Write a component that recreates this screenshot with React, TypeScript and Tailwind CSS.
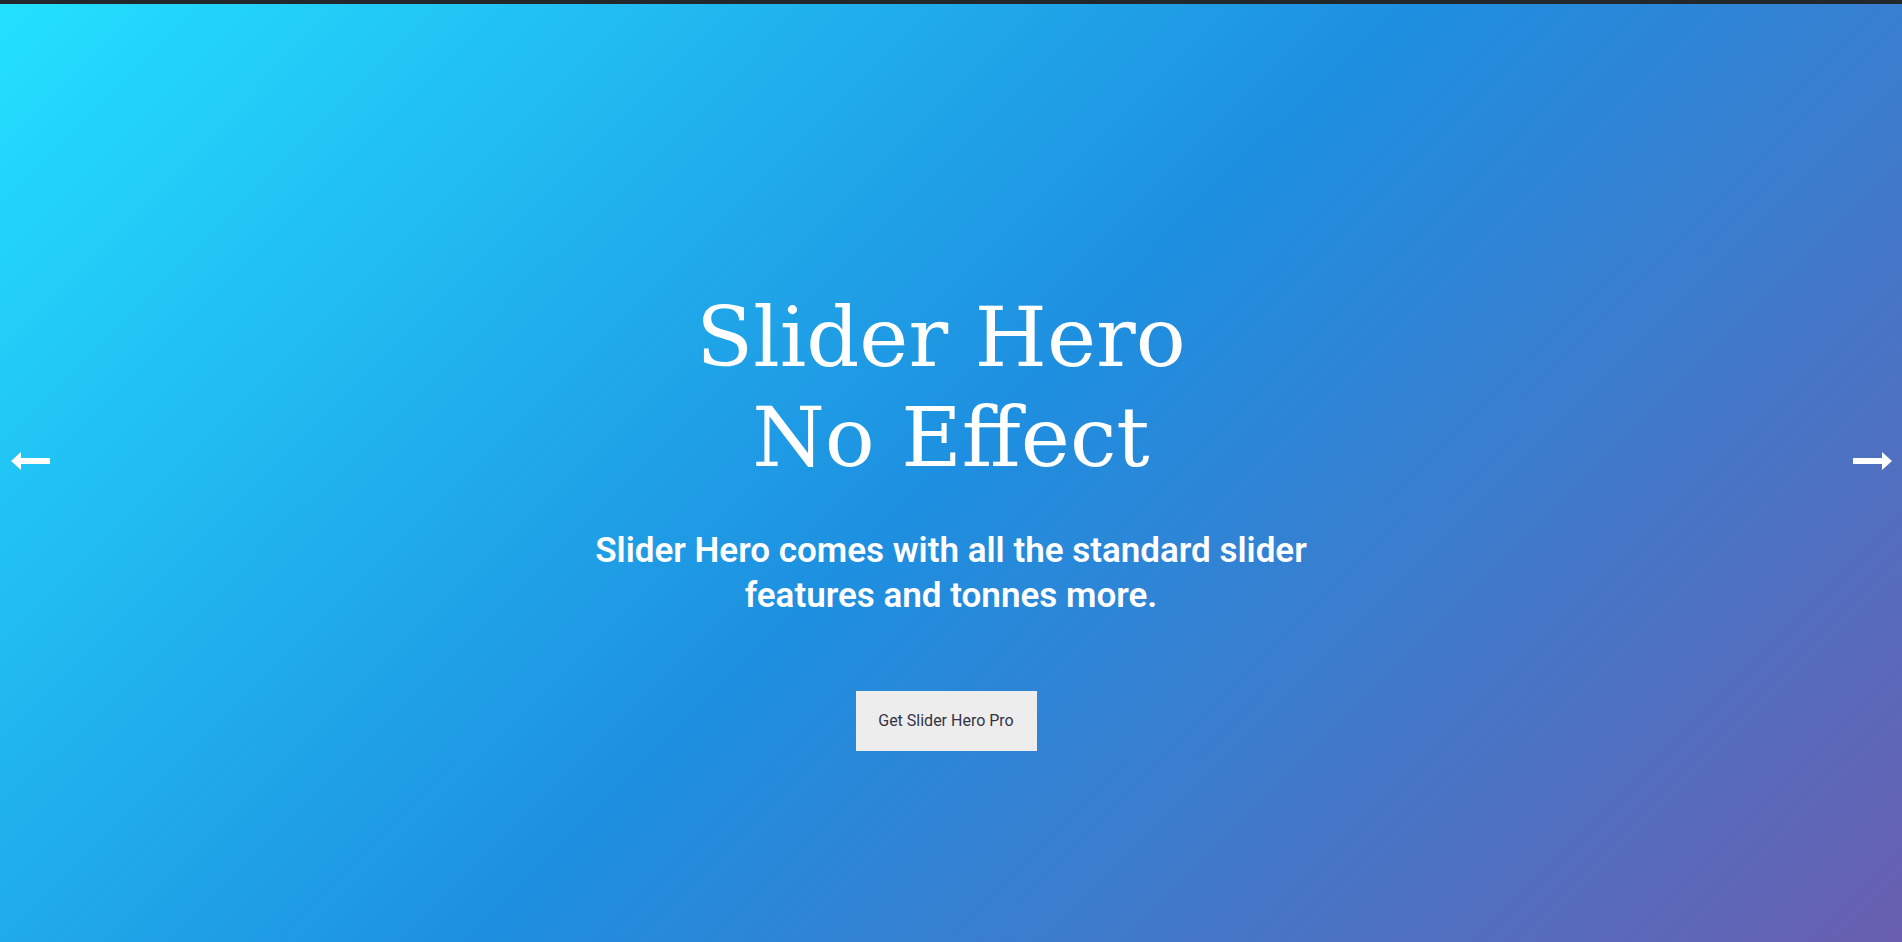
const ArrowLeft = () => (
  <svg width="39" height="20" viewBox="0 0 39 20" fill="white">
    <path d="M0 10 L10 1 L10 7 L39 7 L39 13 L10 13 L10 19 Z" />
  </svg>
);

const ArrowRight = () => (
  <svg width="39" height="20" viewBox="0 0 39 20" fill="white">
    <path d="M39 10 L29 1 L29 7 L0 7 L0 13 L29 13 L29 19 Z" />
  </svg>
);

export default function App() {
  return (
    <div className="flex h-[942px] w-full flex-col overflow-hidden">
      <div className="h-[4px] w-full bg-[#23282d]" />
      <section className="relative flex flex-1 flex-col items-center bg-[linear-gradient(135deg,#23e0ff_0%,#1e8fe0_50%,#6a5fb0_100%)] pt-[284px] text-center text-white">
        <h1 className="font-['DejaVu_Serif',serif] text-[83px] leading-[100px] font-normal">
          <span className="inline-block pr-[20px]">Slider Hero</span>
          <br />
          No Effect
        </h1>
        <p className="mt-[40px] font-['Roboto',sans-serif] text-[35px] leading-[45px] font-semibold">
          Slider Hero comes with all the standard slider
          <br />
          features and tonnes more.
        </p>
        <button className="mt-[73px] -ml-[10px] h-[60px] w-[181px] bg-[#ededed] font-['Roboto',sans-serif] text-[16px] text-[#333344]">
          Get Slider Hero Pro
        </button>

        <button className="absolute top-[447px] left-[11px]">
          <ArrowLeft />
        </button>
        <button className="absolute top-[447px] right-[10px]">
          <ArrowRight />
        </button>
      </section>
    </div>
  );
}
